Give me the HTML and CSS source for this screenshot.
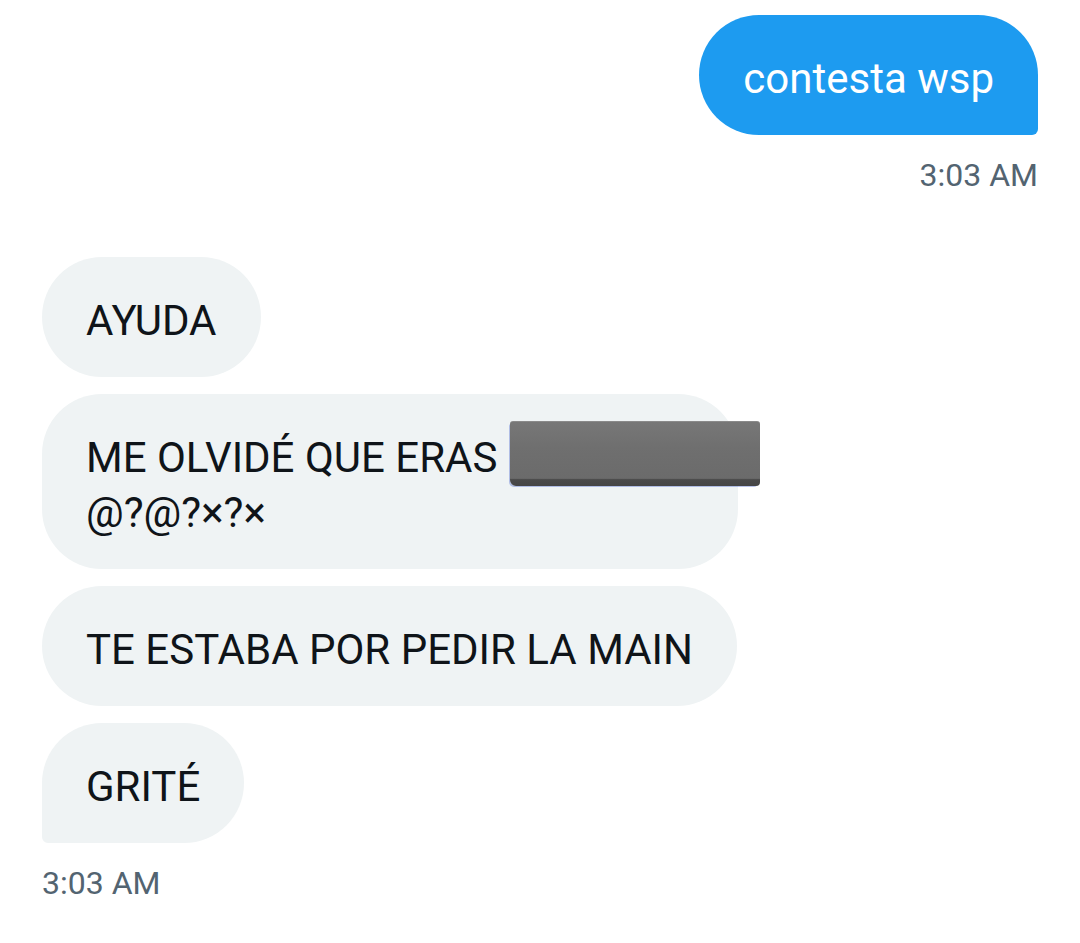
FILE: index.html
```html
<!DOCTYPE html>
<html lang="es">

<head>
  <meta charset="UTF-8">
  <meta name="viewport" content="width=device-width, initial-scale=1.0">
  <title>Mensajes</title>
  <link rel="stylesheet" href="styles.css">
</head>

<body>
  <div class="chat">
    <!-- enviado -->
    <div class="group sent">
      <div class="bubble last">contesta wsp</div>
      <div class="time">3:03 AM</div>
    </div>

    <!-- recibido -->
    <div class="group received">
      <div class="bubble">AYUDA</div>
      <div class="bubble wide">
        ME OLVIDÉ QUE ERAS<br>@?@?×?×
        <span class="redacted"></span>
      </div>
      <div class="bubble">TE ESTABA POR PEDIR LA MAIN</div>
      <div class="bubble last">GRITÉ</div>
      <div class="time">3:03 AM</div>
    </div>
  </div>
</body>

</html>
```

FILE: styles.css
```css
/* conversación */
body {
  margin: 0;
  background: #ffffff;
  font-family: Roboto, "Liberation Sans", sans-serif;
  color: #0f1419;
}

.chat {
  padding: 15px 42px 0;
}

.group {
  display: flex;
  flex-direction: column;
  gap: 17px;
}

.group.sent {
  align-items: flex-end;
}

.group.received {
  align-items: flex-start;
  margin-top: 62px;
}

.bubble {
  position: relative;
  box-sizing: border-box;
  max-width: 696px;
  padding: 36px 44px 29px;
  font-size: 42px;
  line-height: 55px;
  border-radius: 60px;
  background: #eff3f4;
}

.sent .bubble {
  background: #1d9bf0;
  color: #ffffff;
}

.sent .bubble.last {
  border-bottom-right-radius: 6px;
}

.received .bubble.last {
  border-bottom-left-radius: 6px;
}

.bubble.wide {
  width: 696px;
}

/* tapado en la captura */
.redacted {
  position: absolute;
  left: 468px;
  top: 27px;
  width: 250px;
  height: 65px;
  box-sizing: border-box;
  background: linear-gradient(180deg, #777777 0%, #6f6f6f 40%, #6b6b6b 88%, #4a4a4a 90%, #454545 100%);
  border-top: 1px solid #8a8a8a;
  border-radius: 3px 3px 4px 6px;
  box-shadow: -2px 2px 0 -1px rgba(60, 90, 200, 0.35);
}

.time {
  margin-top: 3px;
  font-size: 32px;
  line-height: 40px;
  color: #536471;
}
```
